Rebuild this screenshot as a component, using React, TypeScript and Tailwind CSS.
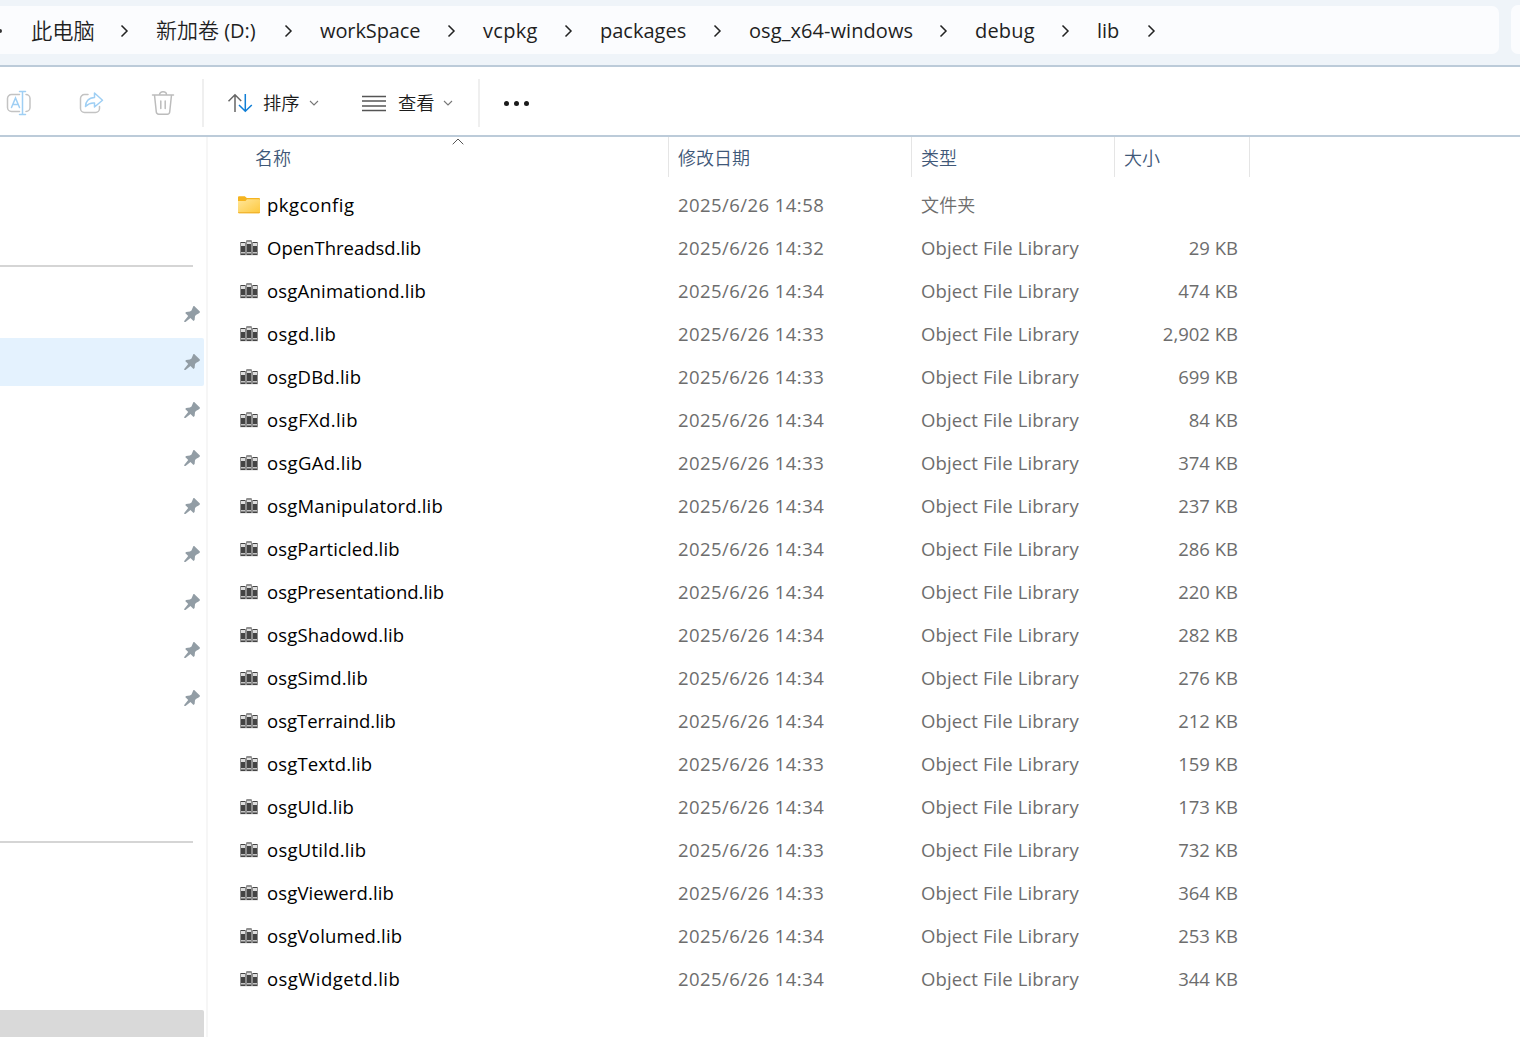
type FileRow = {
  name: string;
  date: string;
  size?: string;
  tracking?: string;
};

const files: FileRow[] = [
  { name: "pkgconfig", date: "2025/6/26 14:58", tracking: "tracking-[0.45px]" },
  { name: "OpenThreadsd.lib", date: "2025/6/26 14:32", size: "29 KB" },
  { name: "osgAnimationd.lib", date: "2025/6/26 14:34", size: "474 KB", tracking: "tracking-[0.2px]" },
  { name: "osgd.lib", date: "2025/6/26 14:33", size: "2,902 KB", tracking: "tracking-[0.3px]" },
  { name: "osgDBd.lib", date: "2025/6/26 14:33", size: "699 KB", tracking: "tracking-[0.2px]" },
  { name: "osgFXd.lib", date: "2025/6/26 14:34", size: "84 KB", tracking: "tracking-[0.38px]" },
  { name: "osgGAd.lib", date: "2025/6/26 14:33", size: "374 KB", tracking: "tracking-[0.33px]" },
  { name: "osgManipulatord.lib", date: "2025/6/26 14:34", size: "237 KB", tracking: "tracking-[0.17px]" },
  { name: "osgParticled.lib", date: "2025/6/26 14:34", size: "286 KB", tracking: "tracking-[0.1px]" },
  { name: "osgPresentationd.lib", date: "2025/6/26 14:34", size: "220 KB" },
  { name: "osgShadowd.lib", date: "2025/6/26 14:34", size: "282 KB", tracking: "tracking-[0.13px]" },
  { name: "osgSimd.lib", date: "2025/6/26 14:34", size: "276 KB", tracking: "tracking-[0.2px]" },
  { name: "osgTerraind.lib", date: "2025/6/26 14:34", size: "212 KB" },
  { name: "osgTextd.lib", date: "2025/6/26 14:33", size: "159 KB", tracking: "tracking-[0.13px]" },
  { name: "osgUId.lib", date: "2025/6/26 14:34", size: "173 KB", tracking: "tracking-[0.15px]" },
  { name: "osgUtild.lib", date: "2025/6/26 14:33", size: "732 KB", tracking: "tracking-[0.25px]" },
  { name: "osgViewerd.lib", date: "2025/6/26 14:33", size: "364 KB", tracking: "tracking-[0.13px]" },
  { name: "osgVolumed.lib", date: "2025/6/26 14:34", size: "253 KB", tracking: "tracking-[0.2px]" },
  { name: "osgWidgetd.lib", date: "2025/6/26 14:34", size: "344 KB", tracking: "tracking-[0.45px]" },
];

const crumbs = [
  { label: "此电脑", className: "w-[64px] -ml-px text-[21.3px] font-[350]" },
  { label: "新加卷", drive: "(D:)", className: "w-[103px] text-[21px] font-[350]" },
  { label: "workSpace", className: "w-[102px] tracking-[-0.1px]" },
  { label: "vcpkg", className: "w-[56px] tracking-[0.3px]" },
  { label: "packages", className: "w-[88px]" },
  { label: "osg_x64-windows", className: "w-[165px] tracking-[0.07px]" },
  { label: "debug", className: "w-[61px] tracking-[0.2px]" },
  { label: "lib", className: "w-[25px]" },
];

const pins = [0, 1, 2, 3, 4, 5, 6, 7, 8];

function ChevronRight() {
  return (
    <svg width="9" height="14" viewBox="0 0 9 14" fill="none" stroke="#222" strokeWidth="1.5">
      <path d="M1.5 1.5 7 7l-5.5 5.5" />
    </svg>
  );
}

function ChevronDown() {
  return (
    <svg width="10" height="6" viewBox="0 0 10 6" fill="none" stroke="#777" strokeWidth="1.1">
      <path d="M1 1l4 4 4-4" />
    </svg>
  );
}

function RenameIcon() {
  return (
    <svg width="26" height="26" viewBox="0 0 26 26" fill="none" strokeWidth="1.5" strokeLinecap="round">
      <path d="M13.5 4.5H5.5a4 4 0 0 0-4 4v9a4 4 0 0 0 4 4h8M20 4.5a4 4 0 0 1 4 4v9a4 4 0 0 1-4 4" stroke="#c3c3c3" />
      <path d="M5.5 17.5 9.5 8l4 9.5M7 14.5h5M13.5 1.5h6M13.5 24.5h6M16.5 1.5v23" stroke="#9fcff4" />
    </svg>
  );
}

function ShareIcon() {
  return (
    <svg width="26" height="26" viewBox="0 0 26 26" fill="none" strokeWidth="1.5" strokeLinecap="round" strokeLinejoin="round">
      <path d="M10 4.5H6.5a4 4 0 0 0-4 4v10a4 4 0 0 0 4 4h11a4 4 0 0 0 4-4v-2" stroke="#c3c3c3" />
      <path d="M16.5 3l8 7.2-8 6.8v-4c-4-.5-6.5 1-9 3.5 0-4.5 3-9 9-9z" stroke="#9fcff4" />
    </svg>
  );
}

function TrashIcon() {
  return (
    <svg width="24" height="26" viewBox="0 0 24 26" fill="none" stroke="#bcbcbc" strokeWidth="1.5" strokeLinecap="round">
      <path d="M1.5 5h21M8.5 4.8C8.5 3 10 1.8 12 1.8s3.5 1.2 3.5 3M3.5 5l1.8 17a2.5 2.5 0 0 0 2.4 2.2h8.6a2.5 2.5 0 0 0 2.4-2.2L20.5 5M9.8 11v7.5M14.2 11v7.5" />
    </svg>
  );
}

function SortIcon() {
  return (
    <svg width="26" height="20" viewBox="0 0 26 20" fill="none" strokeWidth="1.5">
      <path d="M8 19V2M1.5 8.3 8 1.8l6.2 6.2" stroke="#666" />
      <path d="M18.3 1v17M12 12l6.3 6.3L24.8 12" stroke="#0f7ed6" />
    </svg>
  );
}

function ListIcon() {
  return (
    <svg width="24" height="17" viewBox="0 0 24 17" fill="none" stroke="#555" strokeWidth="1.4">
      <path d="M0 1.500h24M0 6h24M0 11h24M0 15.500h24" />
    </svg>
  );
}

function PinIcon() {
  return (
    <svg width="16" height="16" viewBox="0 0 16 16" fill="#929da5">
      <path d="M9.3.3c.5-.4 1-.3 1.4.1l4.9 4.9c.4.4.4 1 0 1.4l-1 .9-2.7 1.3-.9 1.3-.4 3.9-1.1.9-3-2.9-5 3.8-1.2.1-.1-1.1 4-4.9-3-3 1-1.1 3.7-.3 1.6-1.2z" />
    </svg>
  );
}

function FolderIcon() {
  return (
    <svg width="22" height="18" viewBox="0 0 22 18">
      <defs>
        <linearGradient id="folder" x1="0" y1="0" x2="1" y2="1">
          <stop offset="0" stopColor="#ffe69a" />
          <stop offset="1" stopColor="#fdc83c" />
        </linearGradient>
      </defs>
      <path d="M0 1.5C0 .8.5.3 1.2.3h5.6L8.8 2H21a1 1 0 0 1 1 1v4H0z" fill="#f5b41f" />
      <path d="M0 5h7.5L9 3.3h12a1 1 0 0 1 1 1v12a1 1 0 0 1-1 1H1a1 1 0 0 1-1-1z" fill="url(#folder)" />
      <path d="M0 16.3h22a1 1 0 0 1-1 1H1a1 1 0 0 1-1-1z" fill="#eeac25" />
    </svg>
  );
}

// Three book spines, the middle one slightly taller
function LibIcon() {
  return (
    <svg width="20" height="17" viewBox="0 0 20 17">
      <path d="M1 2h6V0h6v2h6v13.5H1z" fill="#d8d8d8" />
      <path d="M1.5 2h5v13h-5zM7.5.5h5V15h-5zM13.5 2h5v13h-5z" fill="#444" />
      <path d="M2 3h4v3H2zM8 1.5h4V4H8zM14 3h4v3h-4z" fill="#dedede" />
      <path d="M2 12h4v1.5H2zM8 12h4v1.5H8zM14 12h4v1.5h-4z" fill="#c4c4c4" />
    </svg>
  );
}

function AddressBar() {
  return (
    <div className="flex h-[67px] border-b-2 border-[#bccbd9] bg-[#eff4f9] pt-[6px]">
      <nav className="flex h-12 w-[1499px] shrink-0 items-center rounded-r-[7px] bg-[#fbfcfe] pt-0.5 text-[20px] text-[#1f1f1f]">
        <div className="flex w-8 shrink-0">
          <span className="-ml-0.5 size-1 rounded-full bg-[#333]" />
        </div>
        {crumbs.map((c) => (
          <div key={c.label} className="flex h-7 shrink-0 items-center">
            <span className={`${c.className} whitespace-nowrap`}>
              {c.label}
              {c.drive && <span className="text-[20px] font-normal"> {c.drive}</span>}
            </span>
            <span className="flex w-[61px] justify-center pr-0.5">
              <ChevronRight />
            </span>
          </div>
        ))}
      </nav>
      <div className="-mt-px ml-3 h-[49px] flex-1 rounded-l-[7px] bg-[#fbfcfe]" />
    </div>
  );
}

function Toolbar() {
  return (
    <div className="flex h-[70px] items-center border-b-2 border-[#bccbd9] bg-white pt-1 text-[18px] text-[#1b1b1b]">
      <div className="flex w-[202px] items-center">
        <span className="ml-[6px] w-[72px]"><RenameIcon /></span>
        <span className="w-[73px]"><ShareIcon /></span>
        <TrashIcon />
      </div>
      <div className="h-12 w-0.5 bg-[#efefef]" />
      <div className="flex w-[274px] items-center pl-[23px]">
        <SortIcon />
        <span className="ml-2.5 w-[46px] text-[18.3px] font-[350]">排序</span>
        <ChevronDown />
        <span className="ml-[43px]"><ListIcon /></span>
        <span className="ml-3 w-[45px] text-[18.3px] font-[350]">查看</span>
        <ChevronDown />
      </div>
      <div className="h-12 w-0.5 bg-[#efefef]" />
      <div className="ml-6 flex gap-[5px] pt-px">
        <span className="size-[5px] rounded-full bg-[#1b1b1b]" />
        <span className="size-[5px] rounded-full bg-[#1b1b1b]" />
        <span className="size-[5px] rounded-full bg-[#1b1b1b]" />
      </div>
    </div>
  );
}

function Sidebar() {
  return (
    <aside className="flex w-[208px] shrink-0 flex-col border-r-2 border-[#f6f6f6]">
      <div className="mt-32 h-0.5 w-[193px] shrink-0 bg-[#d5d5d5]" />
      <div className="mt-[23px] w-[204px]">
        {pins.map((i) => (
          <div
            key={i}
            className={`flex h-12 items-center justify-end rounded-r-[2px] pr-1 ${i === 1 ? "bg-[#e4f2fe]" : ""}`}
          >
            <PinIcon />
          </div>
        ))}
      </div>
      <div className="mt-[119px] h-0.5 w-[193px] shrink-0 bg-[#d5d5d5]" />
      <div className="mt-[167px] w-[204px] flex-1 rounded-tr-[2px] bg-[#d9d9d9]" />
    </aside>
  );
}

function FileList() {
  return (
    <main className="flex-1">
      <div className="flex h-10 text-[18px] leading-[42px] font-[350] text-[#3f5878]">
        <div className="relative w-[461px] border-r border-[#e5e5e5] pl-[47px]">
          名称
          <svg className="absolute top-px left-[243.5px]" width="12" height="7" viewBox="0 0 12 7" fill="none" stroke="#555">
            <path d="M.7 6.3 6 1l5.3 5.3" />
          </svg>
        </div>
        <div className="w-[243px] border-r border-[#e5e5e5] pl-[9px]">修改日期</div>
        <div className="w-[203px] border-r border-[#e5e5e5] pl-[9px]">类型</div>
        <div className="w-[135px] border-r border-[#e5e5e5] pl-[9px]">大小</div>
      </div>
      <div className="pt-1.5">
        {files.map((f) => (
          <div key={f.name} className="flex h-[43px] items-center text-[18.5px] whitespace-nowrap text-[#6d6d6d]">
            <div className="flex w-[470px] items-center pl-[30px] text-black">
              <span className="flex w-[29px]">
                {f.size ? <span className="ml-px pt-0.5"><LibIcon /></span> : <FolderIcon />}
              </span>
              <span className={f.tracking}>{f.name}</span>
            </div>
            <div className="w-[243px] tracking-[0.44px]">{f.date}</div>
            <div className="w-[203px] tracking-[0.13px]">
              {f.size ? "Object File Library" : <span className="text-[18px] font-[350]">文件夹</span>}
            </div>
            <div className="w-[114px] text-right">{f.size}</div>
          </div>
        ))}
      </div>
    </main>
  );
}

export default function App() {
  return (
    <div className="flex h-[1037px] w-[1520px] flex-col overflow-hidden bg-white font-['Open_Sans','Noto_Sans_CJK_SC',sans-serif]">
      <AddressBar />
      <Toolbar />
      <div className="flex min-h-0 flex-1">
        <Sidebar />
        <FileList />
      </div>
    </div>
  );
}
